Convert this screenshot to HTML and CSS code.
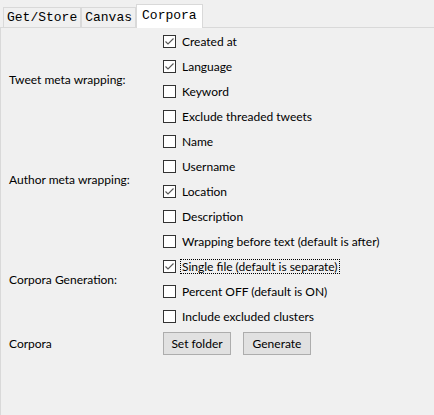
FILE: index.html
```html
<!DOCTYPE html>
<html>
<head>
<meta charset="utf-8">
<link rel="stylesheet" href="styles.css">
</head>
<body>
<div class="tabs">
  <div class="tab">Get/Store</div>
  <div class="tab">Canvas</div>
  <div class="tab active">Corpora</div>
</div>
<div class="panel">
  <div class="group">
    <div class="label">Tweet meta wrapping:</div>
    <div class="options">
      <div class="opt"><span class="box checked"><svg viewBox="0 0 11 11" width="11" height="11"><polyline points="1.5,5.5 4,8 9.5,2.5" /></svg></span><span class="text">Created at</span></div>
      <div class="opt"><span class="box checked"><svg viewBox="0 0 11 11" width="11" height="11"><polyline points="1.5,5.5 4,8 9.5,2.5" /></svg></span><span class="text">Language</span></div>
      <div class="opt"><span class="box"></span><span class="text">Keyword</span></div>
      <div class="opt"><span class="box"></span><span class="text">Exclude threaded tweets</span></div>
    </div>
  </div>
  <div class="group">
    <div class="label">Author meta wrapping:</div>
    <div class="options">
      <div class="opt"><span class="box"></span><span class="text">Name</span></div>
      <div class="opt"><span class="box"></span><span class="text">Username</span></div>
      <div class="opt"><span class="box checked"><svg viewBox="0 0 11 11" width="11" height="11"><polyline points="1.5,5.5 4,8 9.5,2.5" /></svg></span><span class="text">Location</span></div>
      <div class="opt"><span class="box"></span><span class="text">Description</span></div>
    </div>
  </div>
  <div class="group">
    <div class="label">Corpora Generation:</div>
    <div class="options">
      <div class="opt"><span class="box"></span><span class="text">Wrapping before text (default is after)</span></div>
      <div class="opt"><span class="box checked"><svg viewBox="0 0 11 11" width="11" height="11"><polyline points="1.5,5.5 4,8 9.5,2.5" /></svg></span><span class="text focus">Single file (default is separate)</span></div>
      <div class="opt"><span class="box"></span><span class="text">Percent OFF (default is ON)</span></div>
      <div class="opt"><span class="box"></span><span class="text">Include excluded clusters</span></div>
    </div>
  </div>
  <div class="group buttons-row">
    <div class="label">Corpora</div>
    <div class="buttons">
      <button class="btn">Set folder</button>
      <button class="btn">Generate</button>
    </div>
  </div>
</div>
</body>
</html>
```
FILE: styles.css
```css
html, body {
  margin: 0;
  padding: 0;
  background: #f0f0f0;
  height: 100%;
}
body {
  font-family: "Lato", "Noto Sans", sans-serif;
  font-size: 12px;
  color: #000;
  overflow: hidden;
}
.tabs {
  display: flex;
  align-items: flex-end;
  height: 27px;
  padding-left: 3px;
  border-bottom: 1px solid #d9d9d9;
}
.tab {
  box-sizing: border-box;
  height: 20px;
  line-height: 19px;
  padding: 0 3px;
  border: 1px solid #d9d9d9;
  border-bottom: none;
  font-family: "Liberation Mono", monospace;
  font-size: 13px;
  background: #f0f0f0;
}
.tab.active {
  height: 24px;
  margin-bottom: -1px;
  padding: 0 5px 2px;
  line-height: 21px;
  background: #fff;
}
.panel {
  border-left: 1px solid #d9d9d9;
  padding: 1px 0 0 8px;
  height: 400px;
}
.group {
  display: flex;
  align-items: center;
}
.label {
  width: 154px;
  flex: none;
}
.options {
  display: flex;
  flex-direction: column;
}
.opt {
  height: 25px;
  display: flex;
  align-items: center;
  gap: 4px;
}
.box {
  box-sizing: border-box;
  width: 13px;
  height: 13px;
  border: 1px solid #333;
  background: #fff;
  display: flex;
  align-items: center;
  justify-content: center;
}
.box svg polyline {
  fill: none;
  stroke: #555;
  stroke-width: 1.1;
}
.text {
  border: 1px solid transparent;
  padding: 0 1px;
  line-height: 13px;
}
.text.focus {
  border: 1px dotted #000;
}
.buttons-row {
  height: 25px;
  padding-top: 2px;
}
.buttons {
  display: flex;
  gap: 12px;
}
.btn {
  box-sizing: border-box;
  width: 68px;
  height: 23px;
  background: #e1e1e1;
  border: 1px solid #adadad;
  border-radius: 0;
  font-family: "Lato", "Noto Sans", sans-serif;
  font-size: 12px;
  color: #000;
  padding: 0;
  margin: 0;
}
```
